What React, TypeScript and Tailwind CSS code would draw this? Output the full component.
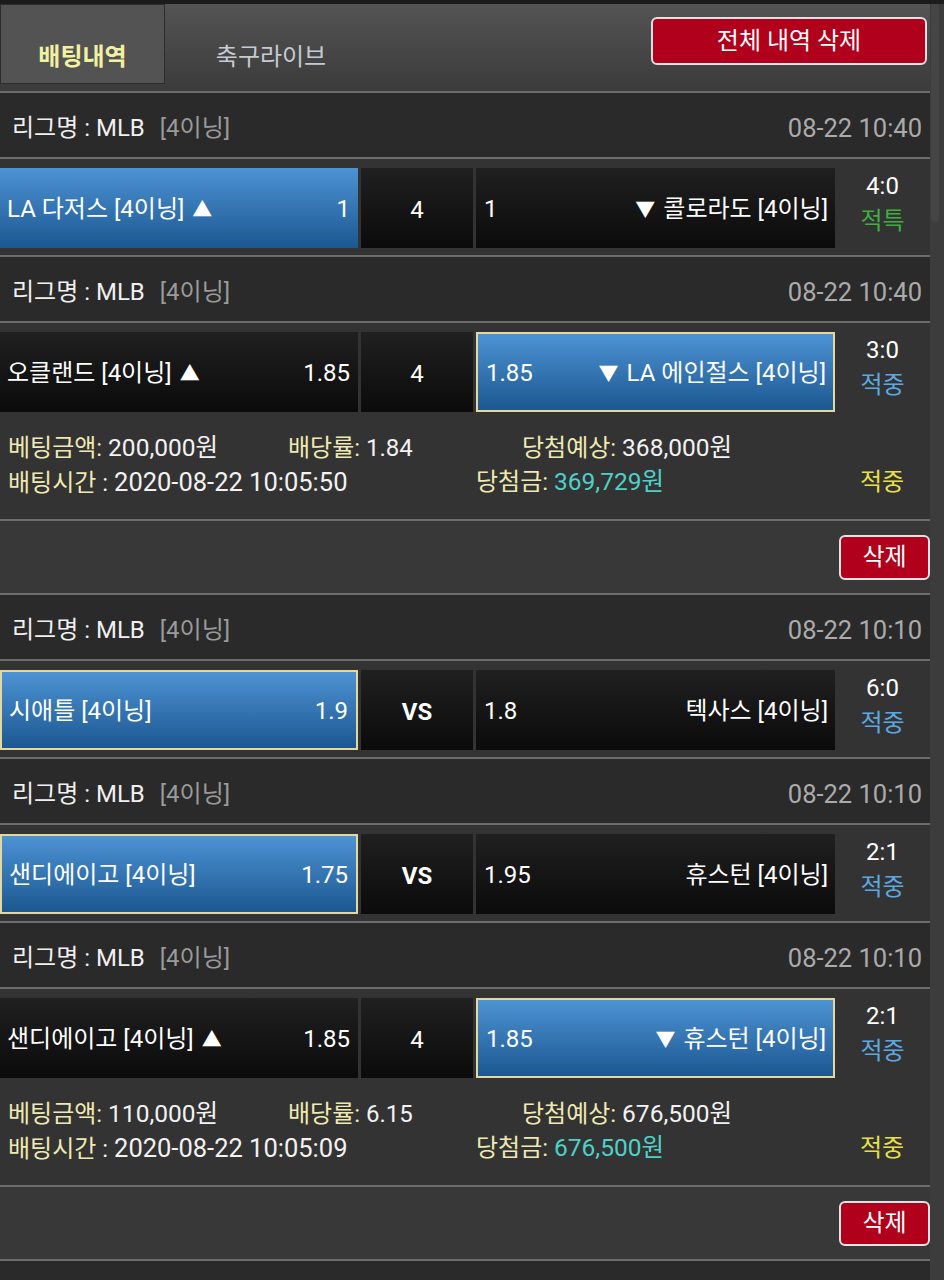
import React from "react";

type Side = { name: string; odds: string; arrow?: "up" | "down"; blue?: boolean; border?: boolean };
type Game = {
  date: string;
  home: Side;
  mid: string;
  midBold?: boolean;
  away: Side;
  score: string;
  result: string;
  resultColor: string;
};
type Bet = {
  amount: string;
  rate: string;
  expect: string;
  time: string;
  win: string;
  status: string;
};

const Sep = () => <div className="h-[2px] bg-[#6c6c6c]" />;

function League({ date }: { date: string }) {
  return (
    <div className="h-[64px] bg-[#2a2a2a] flex items-center justify-between pl-[12px] pr-[8px] pt-[6px]">
      <div className="text-[24px] text-[#f0f0f0]">
        리그명 : MLB <span className="ml-[9px] text-[#9a9a9a]">[4이닝]</span>
      </div>
      <div className="text-[25.5px] text-[#ababab]">{date}</div>
    </div>
  );
}

function cellBg(s: Side) {
  if (s.blue && s.border)
    return "bg-linear-to-b from-[#4d93d4] to-[#1b5891] border-2 border-[#e6d89c]";
  if (s.blue) return "bg-linear-to-b from-[#4d93d4] to-[#1b5891]";
  return "bg-linear-to-b from-[#202020] to-[#0b0b0b]";
}

function Home({ s }: { s: Side }) {
  return (
    <div className={`w-[358px] h-[80px] flex items-center justify-between pl-[7px] pr-[8px] pt-[2px] text-[24px] text-white ${cellBg(s)}`}>
      <span>
        {s.name}
        {s.arrow === "up" && <span className="ml-[8px] text-[20px]">▲</span>}
      </span>
      <span>{s.odds}</span>
    </div>
  );
}

function Away({ s }: { s: Side }) {
  return (
    <div className={`w-[359px] h-[80px] flex items-center justify-between pl-[8px] pr-[7px] pt-[2px] text-[24px] text-white ${cellBg(s)}`}>
      <span>{s.odds}</span>
      <span>
        {s.arrow === "down" && <span className="mr-[8px] text-[20px]">▼</span>}
        {s.name}
      </span>
    </div>
  );
}

function Match({ g }: { g: Game }) {
  return (
    <div className="h-[96px] bg-[#333333] flex pt-[9px]">
      <Home s={g.home} />
      <div className={`ml-[3px] w-[112px] h-[80px] flex items-center justify-center pt-[4px] text-[24px] text-white bg-linear-to-b from-[#202020] to-[#0b0b0b] ${g.midBold ? "font-bold" : ""}`}>
        {g.mid}
      </div>
      <div className="ml-[3px]">
        <Away s={g.away} />
      </div>
      <div className="flex-1 flex flex-col items-center pt-[1px] text-[24px] leading-[35px]">
        <span className="text-white">{g.score}</span>
        <span style={{ color: g.resultColor }}>{g.result}</span>
      </div>
    </div>
  );
}

function BetInfo({ b }: { b: Bet }) {
  const lab = "text-[#efe9b2]";
  return (
    <div className="h-[100px] bg-[#333333] pt-[12px] pl-[8px] text-[24px] leading-[34px] text-[#f2f2f2]">
      <div className="flex">
        <span className="w-[280px]">
          <span className={lab}>베팅금액:</span> <span className="text-[24.5px]">{b.amount}</span>
        </span>
        <span className="w-[234px]">
          <span className={lab}>배당률:</span> {b.rate}
        </span>
        <span>
          <span className={lab}>당첨예상:</span> <span className="text-[24.5px]">{b.expect}</span>
        </span>
      </div>
      <div className="flex">
        <span className="w-[468px]">
          <span className={lab}>배팅시간</span> : <span className="text-[25.5px]">{b.time}</span>
        </span>
        <span className="w-[384px]">
          <span className={lab}>당첨금:</span>{" "}
          <span className="text-[24.5px] text-[#4fd0c8]">{b.win}</span>
        </span>
        <span className="text-[#e8e048]">{b.status}</span>
      </div>
    </div>
  );
}

function DeleteRow() {
  return (
    <div className="h-[72px] bg-[#383838] flex items-center justify-end">
      <button className="w-[91px] h-[45px] rounded-[6px] border-2 border-[#e4e4e4] bg-[#b1001c] text-white text-[24px] flex items-center justify-center">
        삭제
      </button>
    </div>
  );
}

const BLUE = "#5ba8e2";

const games: { g: Game; bet?: Bet }[] = [
  {
    g: {
      date: "08-22 10:40",
      home: { name: "LA 다저스 [4이닝]", odds: "1", arrow: "up", blue: true },
      mid: "4",
      away: { name: "콜로라도 [4이닝]", odds: "1", arrow: "down" },
      score: "4:0",
      result: "적특",
      resultColor: "#3fae3f",
    },
  },
  {
    g: {
      date: "08-22 10:40",
      home: { name: "오클랜드 [4이닝]", odds: "1.85", arrow: "up" },
      mid: "4",
      away: { name: "LA 에인절스 [4이닝]", odds: "1.85", arrow: "down", blue: true, border: true },
      score: "3:0",
      result: "적중",
      resultColor: BLUE,
    },
    bet: {
      amount: "200,000원",
      rate: "1.84",
      expect: "368,000원",
      time: "2020-08-22 10:05:50",
      win: "369,729원",
      status: "적중",
    },
  },
  {
    g: {
      date: "08-22 10:10",
      home: { name: "시애틀 [4이닝]", odds: "1.9", blue: true, border: true },
      mid: "VS",
      midBold: true,
      away: { name: "텍사스 [4이닝]", odds: "1.8" },
      score: "6:0",
      result: "적중",
      resultColor: BLUE,
    },
  },
  {
    g: {
      date: "08-22 10:10",
      home: { name: "샌디에이고 [4이닝]", odds: "1.75", blue: true, border: true },
      mid: "VS",
      midBold: true,
      away: { name: "휴스턴 [4이닝]", odds: "1.95" },
      score: "2:1",
      result: "적중",
      resultColor: BLUE,
    },
  },
  {
    g: {
      date: "08-22 10:10",
      home: { name: "샌디에이고 [4이닝]", odds: "1.85", arrow: "up" },
      mid: "4",
      away: { name: "휴스턴 [4이닝]", odds: "1.85", arrow: "down", blue: true, border: true },
      score: "2:1",
      result: "적중",
      resultColor: BLUE,
    },
    bet: {
      amount: "110,000원",
      rate: "6.15",
      expect: "676,500원",
      time: "2020-08-22 10:05:09",
      win: "676,500원",
      status: "적중",
    },
  },
];

export default function App() {
  return (
    <div className="w-[944px] h-[1280px] overflow-hidden bg-[#333333] font-['Roboto','Noto_Sans_CJK_KR',sans-serif]">
      <div className="h-[4px] bg-[#1b1b1b]" />
      <div className="flex">
        <div className="w-[930px]">
          {/* header */}
          <div className="h-[87px] bg-linear-to-b from-[#545454] to-[#3b3b3b] flex items-start">
            <div className="w-[165px] h-[80px] bg-[#535353] border border-[#2c2c2c] flex items-center justify-center pt-[26px] text-[24px] font-bold text-[#f2f0a2]">
              배팅내역
            </div>
            <div className="w-[212px] h-[80px] flex items-center justify-center pt-[26px] text-[24px] text-[#c6cad2]">
              축구라이브
            </div>
            <div className="flex-1 flex justify-end pt-[13px] pr-[3px]">
              <button className="w-[276px] h-[48px] rounded-[6px] border-2 border-[#e2e2e2] bg-[#b1001c] text-white text-[24px] flex items-center justify-center">
                전체 내역 삭제
              </button>
            </div>
          </div>
          {games.map(({ g, bet }, i) => (
            <React.Fragment key={i}>
              <Sep />
              <League date={g.date} />
              <Sep />
              <Match g={g} />
              {bet && (
                <>
                  <BetInfo b={bet} />
                  <Sep />
                  <DeleteRow />
                </>
              )}
            </React.Fragment>
          ))}
          <Sep />
          <div className="h-[64px] bg-[#2a2a2a]" />
        </div>
        <div className="w-[14px] h-[1276px] bg-[#3c3c3c] pl-[1px]">
          <div className="w-[8px] h-[218px] rounded-b-[4px] bg-[#454545]" />
        </div>
      </div>
    </div>
  );
}
